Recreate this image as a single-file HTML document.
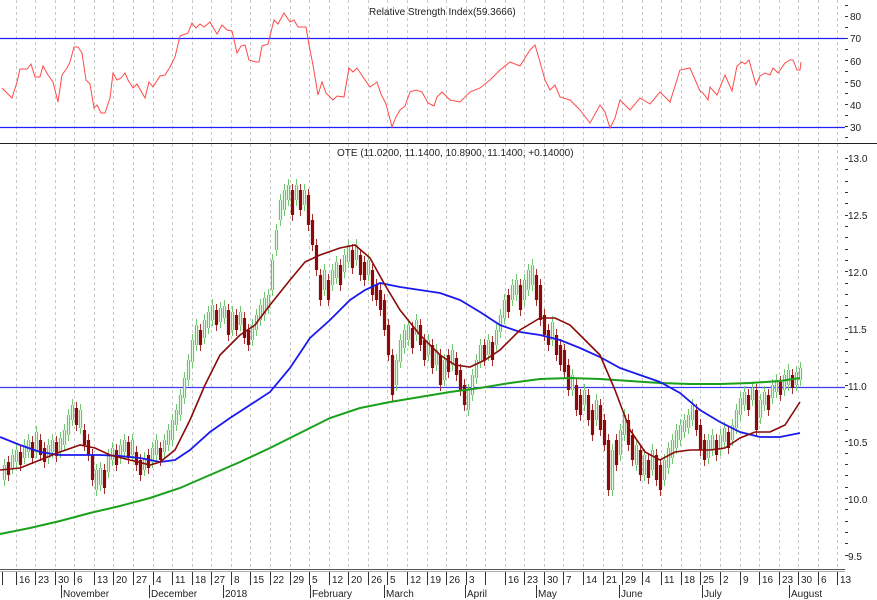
<!DOCTYPE html>
<html><head><meta charset="utf-8"><style>
html,body{margin:0;padding:0;background:#fff;width:877px;height:600px;overflow:hidden}
svg{display:block}
text{font-family:"Liberation Sans",sans-serif;font-size:10px;fill:#222}
</style></head><body>
<svg width="877" height="600" viewBox="0 0 877 600" xmlns="http://www.w3.org/2000/svg" xmlns:xlink="http://www.w3.org/1999/xlink">
<defs>
<path id="up" d="M4 465V480M12 455V468M16 450V462M24 445V458M28 440V452M36 432V452M48 445V458M52 440V452M60 438V452M64 430V445M68 415V435M72 405V420M80 410V428M96 470V490M100 468V485M108 455V472M112 448V460M120 445V458M124 440V452M132 440V455M144 458V470M152 448V462M156 440V455M164 440V452M168 430V445M172 420V440M176 410V425M180 395V415M184 378V398M188 360V380M192 340V362M196 325V345M204 320V338M208 312V328M212 305V320M220 308V322M224 306V318M232 312V330M240 312V325M252 325V340M256 315V330M260 305V320M264 298V315M268 295V308M272 260V290M276 230V250M280 200V220M284 190V210M288 185V200M296 185V200M304 190V205M324 270V290M332 270V285M336 262V278M344 255V272M348 245V262M356 245V260M368 260V275M396 360V385M400 340V362M404 330V348M408 325V340M416 320V335M428 340V355M436 350V365M444 360V380M452 350V365M468 390V410M472 375V395M476 360V378M480 345V362M488 340V355M496 330V345M500 315V332M504 300V318M512 285V300M516 280V295M524 280V300M528 270V290M532 265V285M552 322V340M572 375V390M584 390V405M596 400V420M612 450V490M620 430V455M624 415V435M636 445V465M644 455V475M652 450V470M664 460V480M668 448V468M672 440V458M676 430V448M680 425V440M684 420V432M688 415V428M692 405V420M708 440V458M712 435V450M720 435V450M724 428V442M732 425V440M736 410V428M740 398V415M744 392V405M752 388V400M760 400V418M764 392V405M772 385V398M776 380V392M784 375V390M788 370V385M796 372V385M800 368V380"/>
<path id="dn" d="M8 462V475M20 452V465M32 442V458M40 440V455M44 448V462M56 442V456M76 408V425M84 430V445M88 440V455M92 455V480M104 470V488M116 450V465M128 442V458M136 452V465M140 460V475M148 455V468M160 448V460M200 330V345M216 310V325M228 310V335M236 315V330M244 318V338M248 330V345M292 190V215M300 190V210M308 195V225M312 220V245M316 245V270M320 275V300M328 280V300M340 265V285M352 250V268M360 255V275M364 262V280M372 270V295M376 285V300M380 290V310M384 300V330M388 325V355M392 355V395M412 328V348M420 325V345M424 340V360M432 345V368M440 355V385M448 355V372M456 358V375M460 370V390M464 385V405M484 345V360M492 342V360M508 295V312M520 285V310M536 275V300M540 285V320M544 315V335M548 330V345M556 335V355M560 345V365M564 350V372M568 365V390M576 385V410M580 395V415M588 395V420M592 410V435M600 405V430M604 420V445M608 440V490M616 440V465M628 420V445M632 435V460M640 450V475M648 460V478M656 455V480M660 465V490M696 410V430M700 425V450M704 440V460M716 440V455M728 432V448M748 395V410M756 390V430M768 395V410M780 382V395M792 375V388"/>
</defs>
<g stroke="#c8c8c8" stroke-width="1" stroke-dasharray="3,3" fill="none">
<path d="M16.5 0V569M35.5 0V569M55.5 0V569M74.5 0V569M94.5 0V569M113.5 0V569M133.5 0V569M153.5 0V569M172.5 0V569M192.5 0V569M211.5 0V569M231.5 0V569M250.5 0V569M270.5 0V569M290.5 0V569M309.5 0V569M329.5 0V569M348.5 0V569M368.5 0V569M387.5 0V569M407.5 0V569M427.5 0V569M446.5 0V569M466.5 0V569M485.5 0V569M505.5 0V569M524.5 0V569M544.5 0V569M563.5 0V569M583.5 0V569M603.5 0V569M622.5 0V569M642.5 0V569M661.5 0V569M681.5 0V569M700.5 0V569M720.5 0V569M740.5 0V569M759.5 0V569M779.5 0V569M798.5 0V569M818.5 0V569M837.5 0V569"/>
</g>
<line x1="0" y1="38.5" x2="845" y2="38.5" stroke="#2020ff" stroke-width="1.3"/>
<line x1="0" y1="127.5" x2="845" y2="127.5" stroke="#2020ff" stroke-width="1.3"/>
<line x1="0" y1="143.5" x2="877" y2="143.5" stroke="#222" stroke-width="1"/>
<text x="369" y="15">Relative Strength Index(59.3666)</text>
<text x="337" y="156">OTE (11.0200, 11.1400, 10.8900, 11.1400, +0.14000)</text>
<polyline fill="none" stroke="#ff4a4a" stroke-width="1" points="2,88 12,98 17,82 20,69 27,69 31,64 35,77 40,77 43,66 48,75 53,82 58,102 62,75 67,68 70,62 74,47 78,47 82,53 86,80 90,84 94,108 97,105 101,113 105,113 110,98 113,73 117,80 121,78 125,73 128,80 133,88 137,84 145,98 149,82 153,87 160,76 165,75 170,67 175,57 180,36 188,33 192,23 196,28 200,24 204,27 210,22 217,34 222,25 227,30 232,31 237,53 241,46 245,45 249,60 256,62 259,62 262,46 268,44 274,20 278,24 284,13 290,22 294,20 298,27 306,27 309,45 313,65 318,95 322,82 326,93 333,100 337,96 344,97 349,68 353,72 357,68 363,77 370,87 377,82 381,94 386,104 392,127 396,117 400,110 405,106 410,92 416,90 422,92 428,103 434,106 437,97 442,92 450,100 460,102 470,92 480,88 490,80 500,70 510,62 520,66 530,50 535,45 540,62 545,80 550,90 555,85 560,97 570,100 580,110 590,123 600,105 605,112 610,128 615,118 620,100 630,110 640,98 650,104 660,92 670,102 680,70 690,68 700,91 703,93 708,100 710,87 717,95 725,75 732,91 737,66 742,62 745,64 749,60 756,85 760,76 765,73 770,75 773,68 778,73 785,63 790,60 793,60 797,70 800,70 801,62"/>
<line x1="0" y1="387.5" x2="845" y2="387.5" stroke="#3a3aff" stroke-width="1.3"/>
<g fill="none">
<use xlink:href="#up" href="#up" stroke="#70c870" stroke-width="1" transform="translate(0.5,-6)"/>
<use xlink:href="#up" href="#up" stroke="#70c870" stroke-width="1" transform="translate(0.5,6)"/>
<use xlink:href="#dn" href="#dn" stroke="#a03030" stroke-width="1" transform="translate(0.5,-6)"/>
<use xlink:href="#dn" href="#dn" stroke="#a03030" stroke-width="1" transform="translate(0.5,6)"/>
<use xlink:href="#up" href="#up" stroke="#5cc05c" stroke-width="3.2" transform="translate(0.5,0)"/>
<use xlink:href="#up" href="#up" stroke="#e4f8e4" stroke-width="1.2" transform="translate(0.5,0)"/>
<use xlink:href="#dn" href="#dn" stroke="#8b0a0a" stroke-width="3.2" transform="translate(0.5,0)"/>
</g>
<polyline fill="none" stroke="#1aa01a" stroke-width="2" points="0,534 30,528 60,521 90,513 120,506 150,498 180,488 210,475 240,462 270,448 300,433 330,418 360,408 390,402 420,397 450,392 480,388 510,383 540,379 570,378 600,379 630,381 660,383 690,384 720,384 750,383 780,381 800,378"/>
<polyline fill="none" stroke="#1a1aee" stroke-width="1.8" points="0,437 20,445 40,452 60,455 80,455 100,455 120,456 140,458 160,462 175,460 190,450 210,432 230,418 250,405 270,392 290,368 310,338 330,320 350,300 365,290 380,283 400,287 420,290 440,293 460,300 480,312 500,325 520,332 540,335 560,340 580,348 600,357 620,368 640,375 660,382 680,393 700,410 720,422 740,432 760,437 780,437 800,433"/>
<polyline fill="none" stroke="#8b0a0a" stroke-width="1.6" points="0,470 20,468 40,460 60,452 80,445 95,448 110,455 130,460 150,465 160,462 175,450 190,420 205,385 220,355 240,335 255,325 270,305 290,280 305,262 320,255 340,248 355,245 370,258 385,285 400,310 420,335 440,355 455,365 470,367 485,360 500,350 520,330 540,318 555,318 570,325 585,340 600,355 615,390 630,430 645,452 660,460 675,452 690,450 710,450 725,448 740,438 755,432 770,432 785,425 800,402"/>
<g stroke="#333" stroke-width="1" fill="none">
<path d="M2.5 572V585M16.5 572V585M35.5 572V585M55.5 572V585M74.5 572V585M94.5 572V585M113.5 572V585M133.5 572V585M153.5 572V585M172.5 572V585M192.5 572V585M211.5 572V585M231.5 572V585M250.5 572V585M270.5 572V585M290.5 572V585M309.5 572V585M329.5 572V585M348.5 572V585M368.5 572V585M387.5 572V585M407.5 572V585M427.5 572V585M446.5 572V585M466.5 572V585M485.5 572V585M505.5 572V585M524.5 572V585M544.5 572V585M563.5 572V585M583.5 572V585M603.5 572V585M622.5 572V585M642.5 572V585M661.5 572V585M681.5 572V585M700.5 572V585M720.5 572V585M740.5 572V585M759.5 572V585M779.5 572V585M798.5 572V585M818.5 572V585M837.5 572V585"/>
<path d="M61.5 585V598M149.5 585V598M223.5 585V598M310.5 585V598M384.5 585V598M465.5 585V598M536.5 585V598M619.5 585V598M702.5 585V598M789.5 585V598"/>
<path d="M845 5.5h3M845 16.5h3M845 27.5h3M845 38.5h3M845 49.5h3M845 60.5h3M845 71.5h3M845 82.5h3M845 93.5h3M845 104.5h3M845 115.5h3M845 126.5h3M845 137.5h3"/>
<path d="M845 158.5h3M845 169.5h3M845 181.5h3M845 192.5h3M845 203.5h3M845 215.5h3M845 226.5h3M845 237.5h3M845 249.5h3M845 260.5h3M845 271.5h3M845 283.5h3M845 294.5h3M845 305.5h3M845 317.5h3M845 328.5h3M845 339.5h3M845 351.5h3M845 362.5h3M845 373.5h3M845 385.5h3M845 396.5h3M845 407.5h3M845 419.5h3M845 430.5h3M845 441.5h3M845 453.5h3M845 464.5h3M845 475.5h3M845 487.5h3M845 498.5h3M845 509.5h3M845 521.5h3M845 532.5h3M845 543.5h3M845 555.5h3"/>
</g>
<line x1="0" y1="569.5" x2="845" y2="569.5" stroke="#555"/>
<line x1="0" y1="571.5" x2="845" y2="571.5" stroke="#aaa"/>
<g font-size="10">
<text x="850" y="20">80</text><text x="850" y="42">70</text><text x="850" y="65">60</text><text x="850" y="87">50</text><text x="850" y="109">40</text><text x="850" y="131">30</text>
<text x="848" y="162">13.0</text><text x="848" y="219">12.5</text><text x="848" y="276">12.0</text><text x="848" y="333">11.5</text><text x="848" y="390">11.0</text><text x="848" y="446">10.5</text><text x="848" y="503">10.0</text><text x="848" y="560">9.5</text>
</g>
<g font-size="10">
<text x="19" y="583">16</text><text x="38" y="583">23</text><text x="58" y="583">30</text><text x="77" y="583">6</text><text x="97" y="583">13</text><text x="116" y="583">20</text><text x="136" y="583">27</text><text x="156" y="583">4</text><text x="175" y="583">11</text><text x="195" y="583">18</text><text x="214" y="583">27</text><text x="234" y="583">8</text><text x="253" y="583">15</text><text x="273" y="583">22</text><text x="293" y="583">29</text><text x="312" y="583">5</text><text x="332" y="583">12</text><text x="351" y="583">20</text><text x="371" y="583">26</text><text x="390" y="583">5</text><text x="410" y="583">12</text><text x="430" y="583">19</text><text x="449" y="583">26</text><text x="469" y="583">3</text><text x="508" y="583">16</text><text x="527" y="583">23</text><text x="547" y="583">30</text><text x="566" y="583">7</text><text x="586" y="583">14</text><text x="606" y="583">21</text><text x="625" y="583">29</text><text x="645" y="583">4</text><text x="664" y="583">11</text><text x="684" y="583">18</text><text x="703" y="583">25</text><text x="723" y="583">2</text><text x="743" y="583">9</text><text x="762" y="583">16</text><text x="782" y="583">23</text><text x="801" y="583">30</text><text x="821" y="583">6</text><text x="840" y="583">13</text>
</g>
<g font-size="10">
<text x="63" y="597">November</text><text x="151" y="597">December</text><text x="225" y="597">2018</text><text x="312" y="597">February</text><text x="386" y="597">March</text><text x="467" y="597">April</text><text x="538" y="597">May</text><text x="621" y="597">June</text><text x="704" y="597">July</text><text x="791" y="597">August</text>
</g>
</svg>
</body></html>
